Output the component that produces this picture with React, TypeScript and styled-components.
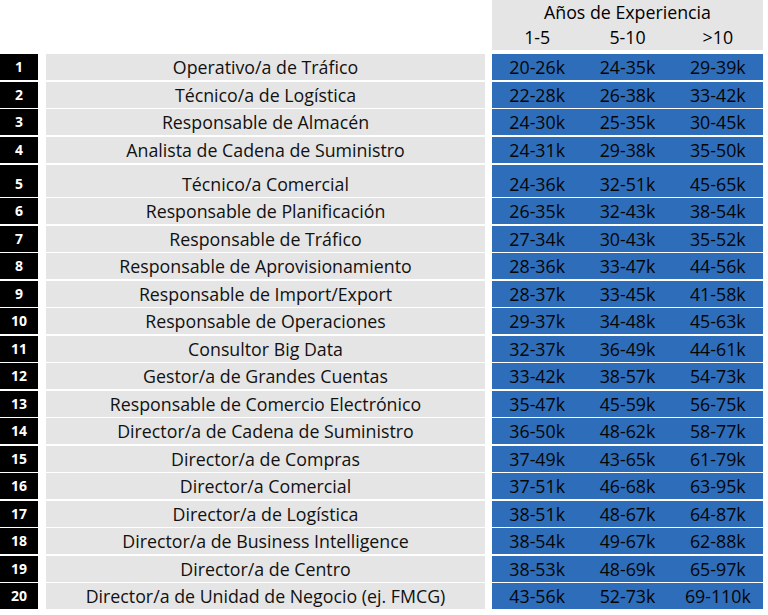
import React from "react";
import styled, { createGlobalStyle } from "styled-components";

const GlobalStyle = createGlobalStyle`
  html, body {
    margin: 0;
    padding: 0;
    background: #ffffff;
  }
  body {
    font-family: "Open Sans", "Liberation Sans", sans-serif;
  }
`;

type Row = { label: string; values: [string, string, string]; tall?: boolean };

const rows: Row[] = [
  { label: "Operativo/a de Tráfico", values: ["20-26k", "24-35k", "29-39k"] },
  { label: "Técnico/a de Logística", values: ["22-28k", "26-38k", "33-42k"] },
  { label: "Responsable de Almacén", values: ["24-30k", "25-35k", "30-45k"] },
  { label: "Analista de Cadena de Suministro", values: ["24-31k", "29-38k", "35-50k"] },
  { label: "Técnico/a Comercial", values: ["24-36k", "32-51k", "45-65k"], tall: true },
  { label: "Responsable de Planificación", values: ["26-35k", "32-43k", "38-54k"] },
  { label: "Responsable de Tráfico", values: ["27-34k", "30-43k", "35-52k"] },
  { label: "Responsable de Aprovisionamiento", values: ["28-36k", "33-47k", "44-56k"] },
  { label: "Responsable de Import/Export", values: ["28-37k", "33-45k", "41-58k"] },
  { label: "Responsable de Operaciones", values: ["29-37k", "34-48k", "45-63k"] },
  { label: "Consultor Big Data", values: ["32-37k", "36-49k", "44-61k"] },
  { label: "Gestor/a de Grandes Cuentas", values: ["33-42k", "38-57k", "54-73k"] },
  { label: "Responsable de Comercio Electrónico", values: ["35-47k", "45-59k", "56-75k"] },
  { label: "Director/a de Cadena de Suministro", values: ["36-50k", "48-62k", "58-77k"] },
  { label: "Director/a de Compras", values: ["37-49k", "43-65k", "61-79k"] },
  { label: "Director/a Comercial", values: ["37-51k", "46-68k", "63-95k"] },
  { label: "Director/a de Logística", values: ["38-51k", "48-67k", "64-87k"] },
  { label: "Director/a de Business Intelligence", values: ["38-54k", "49-67k", "62-88k"] },
  { label: "Director/a de Centro", values: ["38-53k", "48-69k", "65-97k"] },
  { label: "Director/a de Unidad de Negocio (ej. FMCG)", values: ["43-56k", "52-73k", "69-110k"] },
];

const Table = styled.div`
  display: flex;
  flex-direction: column;
  gap: 1.5px;
  width: 768px;
  color: #000;
  font-size: 17.8px;
`;

const HeaderRow = styled.div`
  display: flex;
  margin-bottom: 2.5px;
`;

const HeaderBox = styled.div`
  margin-left: 492px;
  width: 271px;
  height: 50px;
  background: #e5e5e5;
  display: flex;
  flex-direction: column;
  align-items: stretch;
`;

const HeaderTitle = styled.div`
  text-align: center;
  line-height: 24px;
`;

const HeaderCols = styled.div`
  display: grid;
  grid-template-columns: repeat(3, 1fr);
  line-height: 26px;
`;

const HeaderCol = styled.div`
  text-align: center;
`;

const BodyRow = styled.div<{ $tall?: boolean }>`
  display: flex;
  height: ${(p) => (p.$tall ? "31.5px" : "26px")};
  margin-top: ${(p) => (p.$tall ? "1px" : "0")};
`;

const NumCell = styled.div`
  width: 38px;
  background: #000;
  color: #fff;
  font-weight: 700;
  font-size: 14px;
  display: flex;
  align-items: flex-end;
  justify-content: center;
  line-height: 26px;
  padding-bottom: 0;
  box-sizing: border-box;
`;

const LabelCell = styled.div`
  margin-left: 8px;
  width: 439px;
  background: #e5e5e5;
  display: flex;
  align-items: flex-end;
  justify-content: center;
  line-height: 26px;
  box-sizing: border-box;
  white-space: nowrap;
  color: #111;
`;

const ValueGroup = styled.div`
  margin-left: 7px;
  width: 271px;
  background: #2e6db9;
  display: grid;
  grid-template-columns: repeat(3, 1fr);
  align-items: end;
  line-height: 26px;
  box-sizing: border-box;
`;

const ValueCell = styled.div`
  text-align: center;
  color: #050505;
`;

export default function App() {
  return (
    <>
      <GlobalStyle />
      <Table>
        <HeaderRow>
          <HeaderBox>
            <HeaderTitle>Años de Experiencia</HeaderTitle>
            <HeaderCols>
              <HeaderCol>1-5</HeaderCol>
              <HeaderCol>5-10</HeaderCol>
              <HeaderCol>&gt;10</HeaderCol>
            </HeaderCols>
          </HeaderBox>
        </HeaderRow>
        {rows.map((r, i) => (
          <BodyRow key={r.label} $tall={r.tall}>
            <NumCell>{i + 1}</NumCell>
            <LabelCell>{r.label}</LabelCell>
            <ValueGroup>
              {r.values.map((v) => (
                <ValueCell key={v}>{v}</ValueCell>
              ))}
            </ValueGroup>
          </BodyRow>
        ))}
      </Table>
    </>
  );
}
